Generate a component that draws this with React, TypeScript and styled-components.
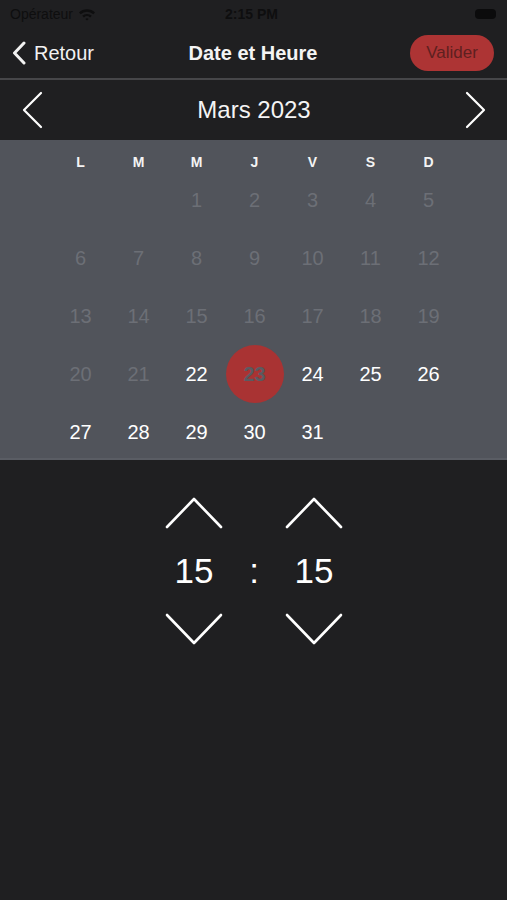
import styled, { createGlobalStyle } from "styled-components";

const GlobalStyle = createGlobalStyle`
  html, body {
    margin: 0;
    padding: 0;
    background: #1f1f21;
  }
  body {
    font-family: "Liberation Sans", Arial, sans-serif;
    color: #ffffff;
  }
`;

const Screen = styled.div`
  width: 507px;
  height: 900px;
  background: #1f1f21;
  display: flex;
  flex-direction: column;
`;

const StatusBar = styled.div`
  height: 28px;
  display: grid;
  grid-template-columns: 1fr auto 1fr;
  align-items: center;
  padding: 0 10px;
  color: #0e0e0f;
  font-size: 14px;
`;

const Carrier = styled.div`
  display: flex;
  align-items: center;
  gap: 5px;
`;

const Clock = styled.div`
  font-weight: bold;
  padding-right: 4px;
`;

const Battery = styled.div`
  justify-self: end;
  width: 21px;
  height: 10px;
  border-radius: 4px;
  background: #0b0b0c;
  margin-right: 1px;
`;

const NavBar = styled.div`
  height: 50px;
  display: grid;
  grid-template-columns: 1fr auto 1fr;
  align-items: center;
  padding: 0 13px 0 12px;
  border-bottom: 2px solid #464649;
`;

const BackButton = styled.div`
  display: flex;
  align-items: center;
  gap: 8px;
  font-size: 20px;
  color: #f2f2f2;
`;

const Title = styled.div`
  font-size: 20px;
  font-weight: bold;
  color: #f4f4f4;
`;

const ValidateButton = styled.div`
  justify-self: end;
  width: 84px;
  height: 36px;
  border-radius: 18px;
  background: #ad3434;
  color: #5e2020;
  font-size: 17px;
  display: flex;
  align-items: center;
  justify-content: center;
`;

const MonthBar = styled.div`
  height: 60px;
  display: flex;
  align-items: center;
  justify-content: space-between;
  padding: 0 21px 0 22px;
`;

const MonthLabel = styled.div`
  font-size: 24px;
  color: #f4f4f4;
`;

const CalendarPanel = styled.div`
  background: #51545b;
  padding: 13px 49px 0 51px;
  height: 320px;
  box-sizing: border-box;
  border-bottom: 2px solid #5a5d64;
`;

const Grid = styled.div`
  display: grid;
  grid-template-columns: repeat(7, 58px);
  justify-content: center;
`;

const WeekDay = styled.div`
  height: 18px;
  display: flex;
  align-items: center;
  justify-content: center;
  font-size: 14px;
  font-weight: bold;
  color: #f4f4f4;
`;

const DayCell = styled.div<{ $active?: boolean; $selected?: boolean }>`
  height: 58px;
  display: flex;
  align-items: center;
  justify-content: center;
  font-size: 20px;
  color: ${(p) => (p.$selected ? "#5a5b61" : p.$active ? "#ffffff" : "#6c6f76")};
  font-weight: ${(p) => (p.$selected ? "bold" : "normal")};
  position: relative;
  z-index: 0;

  &::before {
    content: "";
    display: ${(p) => (p.$selected ? "block" : "none")};
    position: absolute;
    width: 58px;
    height: 58px;
    border-radius: 50%;
    background: #a93333;
    z-index: -1;
  }
`;

const TimePicker = styled.div`
  display: flex;
  justify-content: center;
  padding-top: 37px;
  padding-left: 1px;
`;

const TimeColumn = styled.div`
  width: 60px;
  display: flex;
  flex-direction: column;
  align-items: center;
`;

const TimeValue = styled.div`
  height: 84px;
  display: flex;
  align-items: center;
  font-size: 35px;
  color: #ffffff;
`;

const Colon = styled(TimeValue)`
  width: 60px;
  justify-content: center;
  margin-top: 32px;
`;

const Arrow = ({ dir }: { dir: "up" | "down" }) => (
  <svg width="58" height="32" viewBox="0 0 58 32">
    <polyline
      points={dir === "up" ? "2,30 29,2 56,30" : "2,2 29,30 56,2"}
      fill="none"
      stroke="#ffffff"
      strokeWidth="2.6"
      strokeLinecap="round"
      strokeLinejoin="round"
    />
  </svg>
);

const Chevron = ({ dir }: { dir: "left" | "right" }) => (
  <svg width="22" height="38" viewBox="0 0 22 38">
    <polyline
      points={dir === "left" ? "19,2 2,19 19,36" : "3,2 20,19 3,36"}
      fill="none"
      stroke="#ffffff"
      strokeWidth="2.2"
      strokeLinecap="round"
      strokeLinejoin="round"
    />
  </svg>
);

const weekDays = ["L", "M", "M", "J", "V", "S", "D"];

export default function App() {
  const cells: (number | null)[] = [null, null];
  for (let d = 1; d <= 31; d++) cells.push(d);

  return (
    <Screen>
      <GlobalStyle />
      <StatusBar>
        <Carrier>
          Opérateur
          <svg width="18" height="13" viewBox="0 0 18 13">
            <path d="M1 4.5 A11.5 11.5 0 0 1 17 4.5 L15.3 6.3 A9 9 0 0 0 2.7 6.3 Z" fill="#0e0e0f" />
            <path d="M4.2 7.8 A7 7 0 0 1 13.8 7.8 L12.1 9.5 A4.6 4.6 0 0 0 5.9 9.5 Z" fill="#0e0e0f" />
            <path d="M7.4 11 A2.4 2.4 0 0 1 10.6 11 L9 12.6 Z" fill="#0e0e0f" />
          </svg>
        </Carrier>
        <Clock>2:15 PM</Clock>
        <Battery />
      </StatusBar>

      <NavBar>
        <BackButton>
          <svg width="14" height="24" viewBox="0 0 14 24">
            <polyline
              points="12,2 2.5,12 12,22"
              fill="none"
              stroke="#f2f2f2"
              strokeWidth="3"
              strokeLinecap="round"
              strokeLinejoin="round"
            />
          </svg>
          Retour
        </BackButton>
        <Title>Date et Heure</Title>
        <ValidateButton>Valider</ValidateButton>
      </NavBar>

      <MonthBar>
        <Chevron dir="left" />
        <MonthLabel>Mars 2023</MonthLabel>
        <Chevron dir="right" />
      </MonthBar>

      <CalendarPanel>
        <Grid>
          {weekDays.map((d, i) => (
            <WeekDay key={i}>{d}</WeekDay>
          ))}
        </Grid>
        <Grid>
          {cells.map((d, i) => (
            <DayCell key={i} $active={d !== null && d >= 22} $selected={d === 23}>
              {d ?? ""}
            </DayCell>
          ))}
        </Grid>
      </CalendarPanel>

      <TimePicker>
        <TimeColumn>
          <Arrow dir="up" />
          <TimeValue>15</TimeValue>
          <Arrow dir="down" />
        </TimeColumn>
        <Colon>:</Colon>
        <TimeColumn>
          <Arrow dir="up" />
          <TimeValue>15</TimeValue>
          <Arrow dir="down" />
        </TimeColumn>
      </TimePicker>
    </Screen>
  );
}
